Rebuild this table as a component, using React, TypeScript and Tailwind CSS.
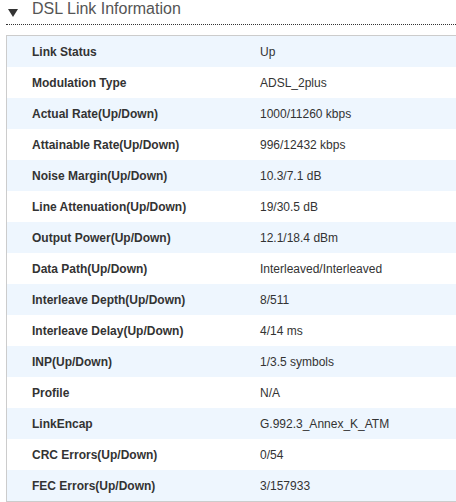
import React from "react";

const rows: [string, string][] = [
  ["Link Status", "Up"],
  ["Modulation Type", "ADSL_2plus"],
  ["Actual Rate(Up/Down)", "1000/11260 kbps"],
  ["Attainable Rate(Up/Down)", "996/12432 kbps"],
  ["Noise Margin(Up/Down)", "10.3/7.1 dB"],
  ["Line Attenuation(Up/Down)", "19/30.5 dB"],
  ["Output Power(Up/Down)", "12.1/18.4 dBm"],
  ["Data Path(Up/Down)", "Interleaved/Interleaved"],
  ["Interleave Depth(Up/Down)", "8/511"],
  ["Interleave Delay(Up/Down)", "4/14 ms"],
  ["INP(Up/Down)", "1/3.5 symbols"],
  ["Profile", "N/A"],
  ["LinkEncap", "G.992.3_Annex_K_ATM"],
  ["CRC Errors(Up/Down)", "0/54"],
  ["FEC Errors(Up/Down)", "3/157933"],
];

export default function App() {
  return (
    <div
      className="w-[456px] h-[502px] overflow-hidden bg-white"
      style={{ fontFamily: '"Liberation Sans", Arial, sans-serif' }}
    >
      <div className="ml-[6px] h-[25px] border-b border-dotted border-[#333] flex items-start">
        <span className="mt-[9px] ml-[2px] w-0 h-0 border-l-[5px] border-r-[5px] border-t-[8px] border-l-transparent border-r-transparent border-t-[#333]" />
        <span className="ml-[14px] mt-[1px] text-[16px] leading-[16px] text-[#555]">
          DSL Link Information
        </span>
      </div>
      <div className="ml-[6px] mt-[10px] w-[470px] border-l border-t border-b border-[#cccccc]">
        {rows.map(([k, v], i) => (
          <div
            key={k}
            className={`flex h-[31px] items-center text-[12px] text-[#333] ${
              i % 2 === 0 ? "bg-[#eef6fe]" : "bg-white"
            }`}
          >
            <div className="w-[253px] pl-[25px] font-bold">{k}</div>
            <div>{v}</div>
          </div>
        ))}
      </div>
    </div>
  );
}
